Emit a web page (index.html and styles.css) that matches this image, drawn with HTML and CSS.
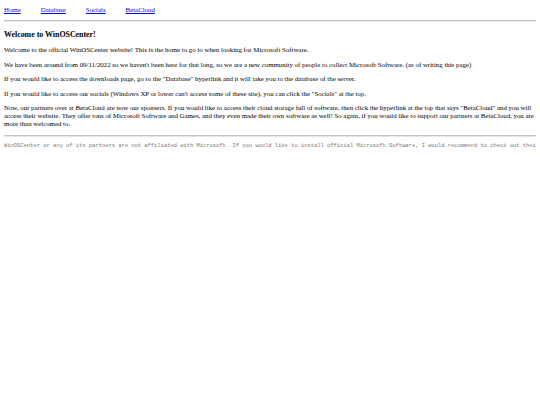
FILE: index.html
```html
<!DOCTYPE html>
<html>
<head>
<meta charset="utf-8">
<title>WinOSCenter</title>
<link rel="stylesheet" href="styles.css">
</head>
<body>
<nav class="nav">
  <a class="nav-link" href="#">Home</a>
  <a class="nav-link" href="#">Database</a>
  <a class="nav-link" href="#">Socials</a>
  <a class="nav-link" href="#">BetaCloud</a>
</nav>
<hr class="rule">
<main class="content">
  <h3 class="title">Welcome to WinOSCenter!</h3>
  <p class="para">Welcome to the official WinOSCenter website! This is the home to go to when looking for Microsoft Software.</p>
  <p class="para">We have been around from 09/11/2022 so we haven't been here for that long, so we are a new community of people to collect Microsoft Software. (as of writing this page)</p>
  <p class="para">If you would like to access the downloads page, go to the "Database" hyperlink and it will take you to the database of the server.</p>
  <p class="para">If you would like to access our socials (Windows XP or lower can't access some of these site), you can click the "Socials" at the top.</p>
  <p class="para">Now, our partners over at BetaCloud are now our sponsers. If you would like to access their cloud storage full of software, then click the hyperlink at the top that says "BetaCloud" and you will access their website. They offer tons of Microsoft Software and Games, and they even made their own software as well! So again, if you would like to support our partners at BetaCloud, you are more than welcomed to.</p>
</main>
<hr class="rule rule-bottom">
<footer class="footer">WinOSCenter or any of its partners are not affiliated with Microsoft. If you would like to install official Microsoft Software, I would recommend to check out their website.</footer>
</body>
</html>
```

FILE: styles.css
```css
html, body {
  overflow: hidden;
}
body {
  margin: 4px;
  font-family: "Liberation Serif", "Times New Roman", serif;
  font-size: 6.85px;
  line-height: 8px;
  color: #000;
  background: #fff;
}
.nav {
  display: flex;
  gap: 20px;
  padding-top: 2px;
}
.nav-link {
  color: #0000ee;
  text-decoration: underline;
}
.rule {
  margin: 6px 0;
  border: 0;
  border-top: 1px solid #c4c4c4;
  border-bottom: 1px solid #e6e6e6;
  height: 0;
}
.rule-bottom {
  margin: 4px 0 5px;
}
.title {
  font-size: 7.9px;
  font-weight: bold;
  margin: 9px 0 7px;
}
.para {
  margin: 6.5px 0;
}
.footer {
  font-family: "Liberation Mono", "Courier New", monospace;
  font-size: 5.45px;
  color: #7a7a7a;
  white-space: nowrap;
  margin-top: 3.5px;
}
```
